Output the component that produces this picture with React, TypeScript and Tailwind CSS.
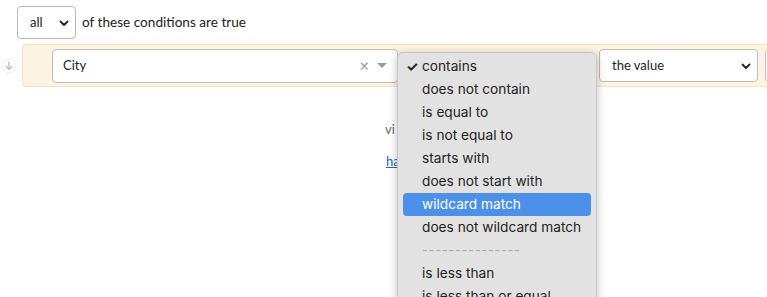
import React from "react";

const items = [
  "contains",
  "does not contain",
  "is equal to",
  "is not equal to",
  "starts with",
  "does not start with",
  "wildcard match",
  "does not wildcard match",
  "SEP",
  "is less than",
  "is less than or equal",
];

export default function App() {
  return (
    <div
      className="relative w-[767px] h-[297px] overflow-hidden bg-white text-[#222]"
      style={{ fontFamily: "Lato, 'Noto Sans', sans-serif" }}
    >
      <div className="flex items-center pl-[17px] pt-[6px] gap-[6px]">
        <div className="flex items-center justify-between w-[59px] h-[33px] border border-[#b9b9b9] rounded-[4px] bg-white pl-[12px] pr-[6px] text-[13px]">
          <span>all</span>
          <svg width="10" height="10" viewBox="0 0 10 10">
            <path d="M1.5 3.5 L5 7 L8.5 3.5" fill="none" stroke="#222" strokeWidth="1.8" strokeLinecap="round" strokeLinejoin="round" />
          </svg>
        </div>
        <span className="text-[13.6px]">of these conditions are true</span>
      </div>

      <div className="flex items-center mt-[5px]">
        <div className="w-[22px] shrink-0 flex justify-start pl-[1px]">
          <svg width="16" height="16" viewBox="0 0 16 16">
            <circle cx="8" cy="8" r="7" fill="#fff" stroke="#eee" strokeWidth="1" />
            <path d="M8 4 V11.5 M5 8.5 L8 11.5 L11 8.5" fill="none" stroke="#bbb" strokeWidth="1.3" strokeLinecap="round" strokeLinejoin="round" />
          </svg>
        </div>
        <div className="flex-1 min-w-0 overflow-hidden h-[43px] bg-[#fdf3e3] border border-[#f6e2bd] border-r-0 rounded-l-[4px] flex items-center pl-[29px]">
          <div className="flex shrink-0 items-center w-[346px] h-[34px] bg-white border border-[#bdbdbd] rounded-[4px] pl-[10px] pr-[10px] text-[13px]">
            <span className="flex-1">City</span>
            <span className="text-[#999] text-[17px] leading-none mr-[8px]">×</span>
            <svg width="10" height="6" viewBox="0 0 10 6">
              <path d="M0 0 H10 L5 5 Z" fill="#999" />
            </svg>
          </div>
          <div className="w-[201px] shrink-0" />
          <div className="flex shrink-0 items-center justify-between w-[159px] h-[33px] bg-white border border-[#bdbdbd] rounded-[4px] pl-[12px] pr-[6px] text-[13px]">
            <span>the value</span>
            <svg width="10" height="10" viewBox="0 0 10 10">
              <path d="M1.5 3.5 L5 7 L8.5 3.5" fill="none" stroke="#222" strokeWidth="1.8" strokeLinecap="round" strokeLinejoin="round" />
            </svg>
          </div>
          <div className="ml-[7px] shrink-0 w-[10px] h-[33px] bg-white border border-[#bdbdbd] rounded-l-[4px]" />
        </div>
      </div>

      <div className="absolute left-[385px] top-[120px] text-[13px] text-[#666]">vi</div>
      <div className="absolute left-[386px] top-[152px] text-[13px] text-[#2366c6] underline">ha</div>

      <div
        className="absolute left-[397px] top-[52px] w-[200px] h-[260px] bg-[#e2e2e2] border border-[#c8c8c8] rounded-[6px] shadow-[0_2px_8px_rgba(0,0,0,0.25)] px-[5px] pt-[2px]"
        style={{ fontFamily: "Inter, 'Liberation Sans', sans-serif" }}
      >
        {items.map((it, i) =>
          it === "SEP" ? (
            <div key={i} className="h-[23px] flex items-center pl-[19px] text-[#aaa] text-[13px] tracking-[0.6px]">
              ---------------
            </div>
          ) : (
            <div
              key={i}
              className={
                "h-[23px] flex items-center pl-[19px] rounded-[4px] text-[13.7px] relative " +
                (it === "wildcard match" ? "bg-[#4c90ea] text-white" : "text-[#222]")
              }
            >
              {i === 0 && <span className="absolute left-[3px] text-[14px] font-bold">✓</span>}
              {it}
            </div>
          )
        )}
      </div>
    </div>
  );
}
